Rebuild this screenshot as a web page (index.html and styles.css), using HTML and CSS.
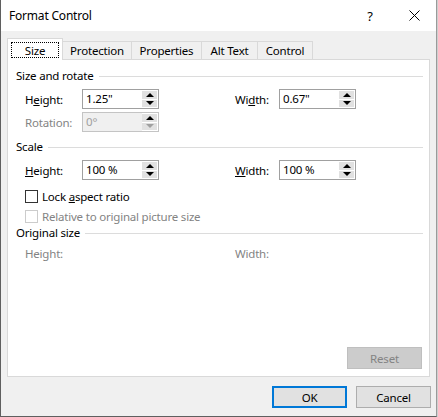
FILE: index.html
```html
<!DOCTYPE html>
<html>
<head>
<meta charset="utf-8">
<title>Format Control</title>
<link rel="stylesheet" href="styles.css">
</head>
<body>
<div class="window">
  <div class="titlebar">
    <span class="title">Format Control</span>
    <span class="help">?</span>
    <svg class="close" width="11" height="11" viewBox="0 0 11 11"><path d="M0.5 0.5 L10.5 10.5 M10.5 0.5 L0.5 10.5" stroke="#000" stroke-width="1" fill="none"/></svg>
  </div>
  <div class="main">
    <div class="tabs">
      <div class="tab active"><span class="focus">Size</span></div>
      <div class="tab w-prot">Protection</div>
      <div class="tab w-props">Properties</div>
      <div class="tab w-alt">Alt Text</div>
      <div class="tab w-ctrl">Control</div>
    </div>
    <div class="panel">
      <div class="group"><span>Size and rotate</span><i class="rule"></i></div>
      <div class="row first">
        <span class="lbl">H<u>e</u>ight:</span>
        <div class="spin"><span class="val">1.25"</span><span class="arrows"><b class="up"></b><b class="down"></b></span></div>
        <span></span>
        <span class="lbl">Wi<u>d</u>th:</span>
        <div class="spin"><span class="val">0.67"</span><span class="arrows"><b class="up"></b><b class="down"></b></span></div>
      </div>
      <div class="row second">
        <span class="lbl dis">Rotation:</span>
        <div class="spin disabled"><span class="val">0°</span><span class="arrows"><b class="up"></b><b class="down dim"></b></span></div>
      </div>
      <div class="group g2"><span>Scale</span><i class="rule"></i></div>
      <div class="row first">
        <span class="lbl"><u>H</u>eight:</span>
        <div class="spin"><span class="val">100 %</span><span class="arrows"><b class="up"></b><b class="down"></b></span></div>
        <span></span>
        <span class="lbl"><u>W</u>idth:</span>
        <div class="spin"><span class="val">100 %</span><span class="arrows"><b class="up"></b><b class="down"></b></span></div>
      </div>
      <div class="check c1"><span class="box"></span><span>Lock <u>a</u>spect ratio</span></div>
      <div class="check c2 dis"><span class="box"></span><span>Relative to original picture size</span></div>
      <div class="group g3"><span>Original size</span><i class="rule"></i></div>
      <div class="row last">
        <span class="lbl dis">Height:</span>
        <span></span>
        <span></span>
        <span class="lbl dis">Width:</span>
        <span></span>
      </div>
      <div class="btn reset">Reset</div>
    </div>
    <div class="buttons">
      <div class="btn ok">OK</div>
      <div class="btn">Cancel</div>
    </div>
  </div>
</div>
</body>
</html>
```
FILE: styles.css
```css
* { box-sizing: border-box; }
html, body { margin: 0; padding: 0; background: #cfcfcf; }
body {
  font-family: "Noto Sans", "Open Sans", sans-serif;
  font-size: 11.5px;
  letter-spacing: -0.2px;
  color: #000;
}
.window {
  width: 437px;
  height: 417px;
  border-left: 1px solid #5f5f5f;
  border-right: 1px solid #9a9a9a;
  border-bottom: 1px solid #5f5f5f;
  background: #f0f0f0;
  display: flex;
  flex-direction: column;
}
.titlebar {
  height: 31px;
  flex: none;
  background: #fff;
  display: flex;
  align-items: center;
}
.title { margin-left: 8px; flex: 1; padding-bottom: 1px; font-size: 12px; }
.help { width: 12px; text-align: center; font-size: 13px; margin-right: 33px; }
.close { margin-right: 16px; }
.main {
  flex: 1;
  display: flex;
  flex-direction: column;
  padding: 7px 6px 8px 6px;
}
.tabs { display: flex; align-items: flex-end; height: 21px; flex: none; }
.tab {
  height: 18px;
  border-top: 1px solid #d9d9d9;
  border-right: 1px solid #d9d9d9;
  display: flex;
  align-items: center;
  justify-content: center;
  padding-bottom: 1px;
}
.w-prot { width: 69px; }
.w-props { width: 70px; }
.w-alt { width: 56px; }
.w-ctrl { width: 55px; }
.tab.active {
  width: 56px;
  height: 22px;
  margin-bottom: -1px;
  border-left: 1px solid #d9d9d9;
  background: #fff;
  position: relative;
  z-index: 1;
  align-items: flex-start;
  padding: 3px 0 0 0;
}
.focus {
  width: 48px;
  height: 16px;
  border: 1px dotted #000;
  display: flex;
  align-items: center;
  justify-content: center;
}
.panel {
  height: 318px;
  flex: none;
  background: #fff;
  border: 1px solid #d9d9d9;
  display: flex;
  flex-direction: column;
  padding: 0 6px 0 8px;
}
.group {
  display: flex;
  align-items: flex-start;
  height: 16px;
  line-height: 16px;
  margin-top: 8px;
}
.group.g2 { margin-top: 7px; }
.group.g3 { margin-top: 1px; }
.rule { flex: 1; height: 1px; background: #dcdcdc; margin: 8px 0 0 5px; }
.row {
  display: grid;
  grid-template-columns: 57px 77px 76px 44px 77px;
  height: 20px;
  align-items: center;
  padding-left: 9px;
}
.row.first { margin-top: 5px; }
.row.second { margin-top: 3px; }
.row.last { margin-top: 2px; }
.dis { color: #838383; }
.spin {
  height: 20px;
  border: 1px solid #a0a0a0;
  display: flex;
  align-items: stretch;
  background: #fff;
}
.spin .val { flex: 1; padding-left: 3px; line-height: 18px; }
.spin.disabled { background: #f0f0f0; border-color: #c4c4c4; }
.spin.disabled .val { color: #a0a0a0; }
.arrows {
  width: 16px;
  display: flex;
  flex-direction: column;
  gap: 1px;
  padding: 1px 1px 1px 0;
  background: #fff;
}
.arrows b {
  flex: 1;
  background: #e1e1e1;
  display: flex;
  align-items: center;
  justify-content: center;
}
.arrows b::after {
  content: "";
  width: 0;
  height: 0;
  border-left: 4px solid transparent;
  border-right: 4px solid transparent;
}
.arrows .up::after { border-bottom: 4px solid #000; }
.arrows .down::after { border-top: 4px solid #000; }
.arrows .down.dim::after { border-top-color: #a0a0a0; }
.check {
  display: flex;
  align-items: center;
  height: 16px;
  padding-left: 9px;
  gap: 4px;
}
.check.c1 { margin-top: 8px; }
.check.c2 { margin-top: 4px; }
.box {
  width: 13px;
  height: 13px;
  border: 1px solid #333;
  background: #fff;
}
.check.dis .box { border-color: #cccccc; }
.btn {
  width: 75px;
  height: 22px;
  border: 1px solid #adadad;
  background: #e1e1e1;
  display: flex;
  align-items: center;
  justify-content: center;
}
.btn.reset {
  align-self: flex-end;
  margin-top: auto;
  margin-bottom: 7px;
  margin-right: 1px;
  background: #cccccc;
  border-color: #bfbfbf;
  color: #838383;
}
.buttons {
  display: flex;
  justify-content: flex-end;
  gap: 9px;
  margin-top: 9px;
  margin-right: -1px;
}
.btn.ok { border: 2px solid #0078d7; }
```
